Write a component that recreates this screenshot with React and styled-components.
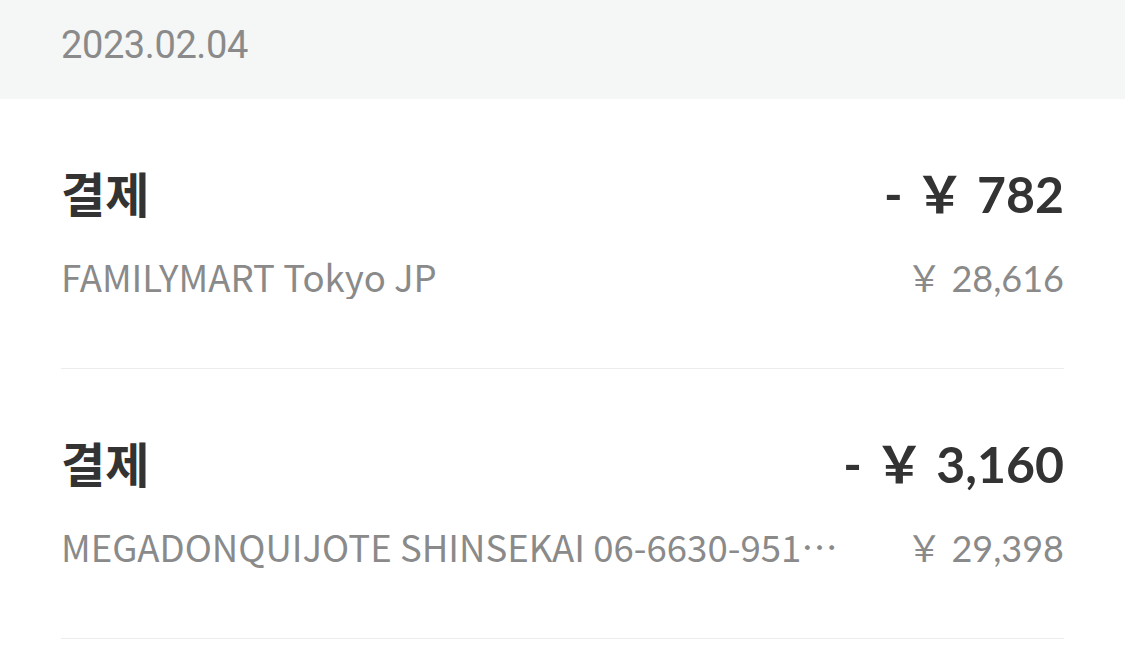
import React from "react";
import styled, { createGlobalStyle } from "styled-components";

const Global = createGlobalStyle`
  html, body { margin: 0; padding: 0; background: #ffffff; }
  body { width: 1125px; height: 651px; overflow: hidden; }
`;

const Page = styled.div`
  width: 1125px;
  display: flex;
  flex-direction: column;
`;

const DateBar = styled.div`
  height: 99px;
  background: #f5f6f6;
  padding: 0 61px 10px;
  display: flex;
  align-items: center;
  box-sizing: border-box;
`;

const DateText = styled.span`
  font-family: Roboto, "Liberation Sans", sans-serif;
  font-size: 38px;
  letter-spacing: -0.4px;
  color: #8a8a8a;
`;

const List = styled.div`
  padding: 0 61px;
  display: flex;
  flex-direction: column;
`;

const Row = styled.div`
  height: 270px;
  box-sizing: border-box;
  border-bottom: 1px solid #ececec;
  display: flex;
  flex-direction: column;
  padding-top: 65px;
  gap: 31px;
`;

const Line = styled.div`
  display: flex;
  justify-content: space-between;
  align-items: baseline;
  gap: 58px;
`;

const Title = styled.span`
  font-family: "Noto Sans CJK KR", sans-serif;
  font-weight: 700;
  font-size: 48px;
  color: #333333;
  line-height: 1.2;
`;

const Amount = styled.span`
  font-family: Lato, "Noto Sans CJK KR", sans-serif;
  font-weight: 700;
  font-size: 50px;
  color: #333333;
  line-height: 1.2;
  white-space: pre;
`;

const Merchant = styled.span`
  font-family: "Noto Sans CJK KR", sans-serif;
  font-size: 36.6px;
  color: #8a8a8a;
  line-height: 1.2;
  white-space: nowrap;
  overflow: hidden;
  text-overflow: ellipsis;
  min-width: 0;
`;

const Balance = styled.span`
  font-family: Lato, "Noto Sans CJK KR", sans-serif;
  font-size: 36px;
  color: #8a8a8a;
  line-height: 1.2;
  white-space: pre;
  flex-shrink: 0;
`;

const items = [
  { title: "결제", amount: "- ￥ 782", merchant: "FAMILYMART Tokyo JP", balance: "￥ 28,616" },
  { title: "결제", amount: "- ￥ 3,160", merchant: "MEGADONQUIJOTE SHINSEKAI 06-6630-9511 OSAKA JP", balance: "￥ 29,398" },
];

export default function App() {
  return (
    <Page>
      <Global />
      <DateBar>
        <DateText>2023.02.04</DateText>
      </DateBar>
      <List>
        {items.map((it, i) => (
          <Row key={i}>
            <Line>
              <Title>{it.title}</Title>
              <Amount>{it.amount}</Amount>
            </Line>
            <Line>
              <Merchant>{it.merchant}</Merchant>
              <Balance>{it.balance}</Balance>
            </Line>
          </Row>
        ))}
      </List>
    </Page>
  );
}
